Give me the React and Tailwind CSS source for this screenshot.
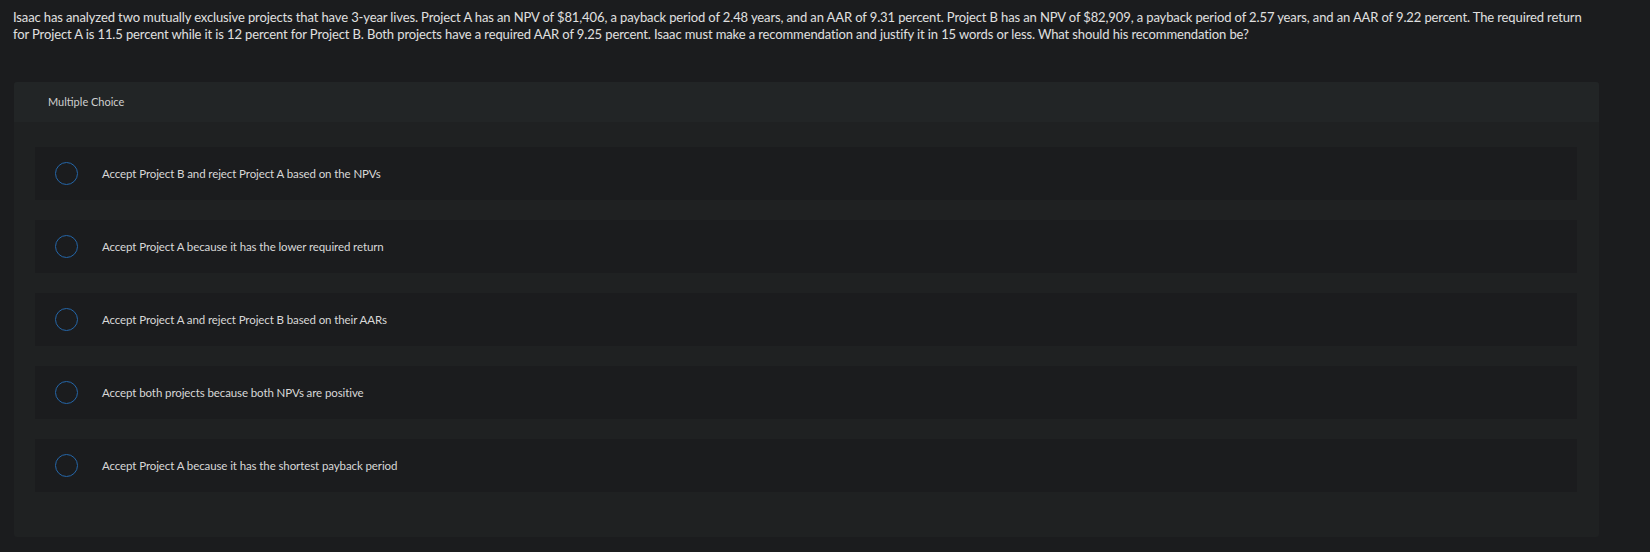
import React from "react";

const options = [
  "Accept Project B and reject Project A based on the NPVs",
  "Accept Project A because it has the lower required return",
  "Accept Project A and reject Project B based on their AARs",
  "Accept both projects because both NPVs are positive",
  "Accept Project A because it has the shortest payback period",
];

export default function App() {
  return (
    <div className="w-full min-h-[552px] bg-[#1b1c1e] text-[#d6d6d6] pt-[9px] pb-[15px]" style={{ fontFamily: "Lato, 'Open Sans', sans-serif" }}>
      <p className="px-[13px] text-[13px] leading-[17px] tracking-[-0.12px] text-[#e0e0e0] w-[1650px]">
        Isaac has analyzed two mutually exclusive projects that have 3-year lives. Project A has an NPV of $81,406, a payback period of 2.48 years, and an AAR of 9.31 percent. Project B has an NPV of $82,909, a payback period of 2.57 years, and an AAR of 9.22 percent. The required return
        <br />
        for Project A is 11.5 percent while it is 12 percent for Project B. Both projects have a required AAR of 9.25 percent. Isaac must make a recommendation and justify it in 15 words or less. What should his recommendation be?
      </p>
      <div className="mt-[39px] ml-[14px] w-[1585px] rounded-[3px] bg-[#1f2122] overflow-hidden">
        <div className="h-[40px] bg-[#222526] pl-[34px] flex items-center text-[11px] text-[#cfcfcf]">
          Multiple Choice
        </div>
        <div className="pt-[25px] pb-[45px] pl-[21px] pr-[22px] flex flex-col gap-[20px]">
          {options.map((o) => (
            <div key={o} className="h-[53px] bg-[#1b1c1e] flex items-center pl-[20px]">
              <span className="w-[23px] h-[23px] rounded-full border border-[#2566a8] shrink-0" />
              <span className="ml-[24px] text-[11.5px] tracking-[-0.1px] text-[#d8d8d8]">{o}</span>
            </div>
          ))}
        </div>
      </div>
    </div>
  );
}
